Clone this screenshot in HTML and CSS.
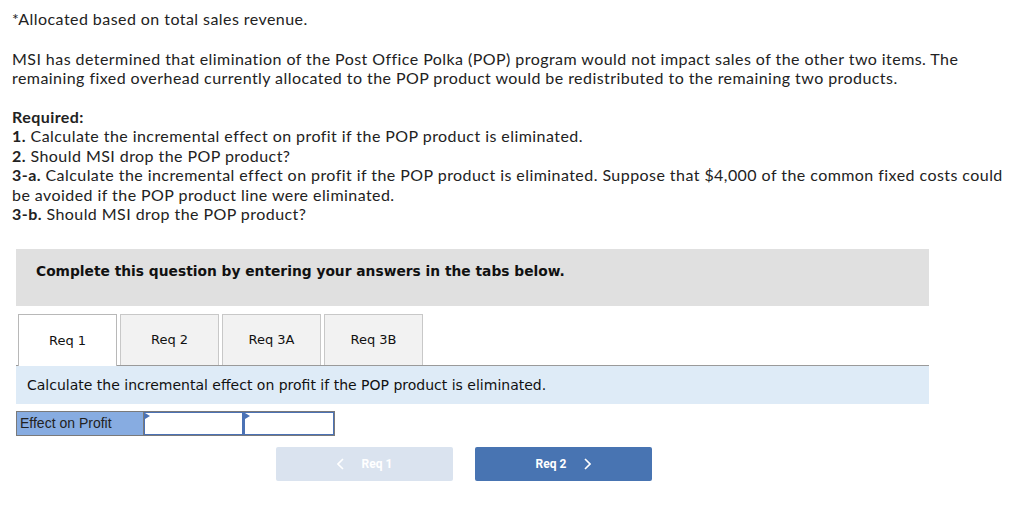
FILE: index.html
```html
<!DOCTYPE html>
<html>
<head>
<meta charset="utf-8">
<link rel="stylesheet" href="styles.css">
</head>
<body>
<div class="intro">
  <p class="note">*Allocated based on total sales revenue.</p>
  <p class="para">MSI has determined that elimination of the Post Office Polka (POP) program would not impact sales of the other two items. The remaining fixed overhead currently allocated to the POP product would be redistributed to the remaining two products.</p>
  <div class="req">
    <div><b>Required:</b></div>
    <div><b>1.</b> Calculate the incremental effect on profit if the POP product is eliminated.</div>
    <div><b>2.</b> Should MSI drop the POP product?</div>
    <div><b>3-a.</b> Calculate the incremental effect on profit if the POP product is eliminated. Suppose that $4,000 of the common fixed costs could be avoided if the POP product line were eliminated.</div>
    <div><b>3-b.</b> Should MSI drop the POP product?</div>
  </div>
</div>
<div class="work">
  <div class="banner">Complete this question by entering your answers in the tabs below.</div>
  <div class="tabs">
    <div class="tab active">Req 1</div>
    <div class="tab">Req 2</div>
    <div class="tab">Req 3A</div>
    <div class="tab">Req 3B</div>
  </div>
  <div class="prompt">Calculate the incremental effect on profit if the POP product is eliminated.</div>
  <div class="grid">
    <div class="label">Effect on Profit</div>
    <div class="input"><span class="flag"></span></div>
    <div class="input last"><span class="flag"></span></div>
  </div>
  <div class="nav">
    <div class="btn prev"><svg class="chev left" width="7" height="12" viewBox="0 0 7 12"><path d="M6 1 L1 6 L6 11" fill="none" stroke="#fff" stroke-width="1.6"/></svg>Req 1</div>
    <div class="btn next">Req 2<svg class="chev right" width="7" height="12" viewBox="0 0 7 12"><path d="M1 1 L6 6 L1 11" fill="none" stroke="#fff" stroke-width="1.6"/></svg></div>
  </div>
</div>
</body>
</html>
```
FILE: styles.css
```css
html, body { margin: 0; padding: 0; background: #fff; }
body { font-family: Lato, "Open Sans", "Liberation Sans", sans-serif; color: #222; }
.intro { padding: 9px 10px 0 12px; font-size: 16px; line-height: 19.5px; letter-spacing: 0.44px; }
.intro p { margin: 0; }
.note { margin-bottom: 20px !important; }
.para { margin-bottom: 19px !important; }
.req b { font-weight: 700; }
.work { margin: 25px 0 0 16px; width: 913px; }
.banner { background: #e0e0e0; height: 57px; display: flex; align-items: flex-start; padding: 14px 0 0 20px; font-family: "DejaVu Sans", Verdana, sans-serif; font-weight: bold; font-size: 13.8px; color: #111; box-sizing: border-box; }
.tabs { display: flex; gap: 3px; margin-top: 8px; padding-left: 2px; border-bottom: 1px solid #9a9a9a; height: 51px; }
.tab { width: 99px; box-sizing: border-box; border: 1px solid #c8c8c8; border-bottom: none; background: #f2f2f2; display: flex; align-items: center; justify-content: center; font-family: "DejaVu Sans", Verdana, sans-serif; font-size: 13px; color: #111; height: 51px; }
.tab.active { background: #fff; height: 52px; border-color: #b8b8b8; position: relative; z-index: 1; }
.prompt { background: #deebf7; height: 38px; display: flex; align-items: center; padding-left: 11px; font-family: "DejaVu Sans", Verdana, sans-serif; font-size: 14px; color: #111; }
.grid { display: flex; margin-top: 7px; height: 25px; width: 319px; border: 1px solid #7a7a7a; box-sizing: border-box; }
.label { width: 127px; background: #87ace1; border-right: 1px solid #7a7a7a; font-family: "Liberation Sans", Arial, sans-serif; font-size: 14px; color: #222; display: flex; align-items: center; padding-left: 3px; box-sizing: border-box; }
.input { width: 99px; border: 1px solid #4b72b5; box-sizing: border-box; background: #fff; position: relative; }
.input.last { width: 91px; border-left-width: 2px; }
.flag { position: absolute; left: 0; top: 0; width: 0; height: 0; border-top: 3px solid transparent; border-bottom: 3px solid transparent; border-left: 5px solid #4b72b5; }
.nav { display: flex; gap: 22px; margin: 11px 0 0 260px; }
.btn { width: 177px; height: 34px; border-radius: 2px; display: flex; align-items: center; justify-content: center; font-family: Roboto, "Liberation Sans", sans-serif; font-weight: 700; font-size: 12px; color: #fff; box-sizing: border-box; }
.prev { background: #dae3ef; }
.next { background: #4874b2; }
.chev { display: block; }
.chev.left { margin-right: 18px; }
.chev.right { margin-left: 18px; }
```
